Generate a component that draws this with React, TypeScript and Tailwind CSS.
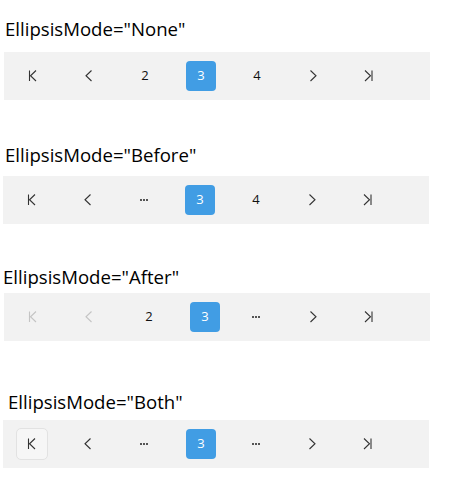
import React from 'react'

type Item = {
  kind: 'first' | 'prev' | 'next' | 'last' | 'page' | 'more'
  label?: string
  active?: boolean
  disabled?: boolean
  hovered?: boolean
  className?: string
}

function Icon({ kind, disabled }: { kind: Item['kind']; disabled?: boolean }) {
  const color = disabled ? '#c4c4c4' : '#333'
  return (
    <svg width="30" height="30" viewBox="0 0 30 30" fill="none" stroke={color} strokeWidth="1.1">
      {kind === 'first' && (
        <>
          <path d="M11.5 9.5v10.5" />
          <path d="M18 9.5l-5.5 5.25 5.5 5.25" />
        </>
      )}
      {kind === 'prev' && <path d="M17.5 9.5l-5.5 5.25 5.5 5.25" />}
      {kind === 'next' && <path d="M12.5 9.5l5.5 5.25-5.5 5.25" />}
      {kind === 'last' && (
        <>
          <path d="M11 9.5l5.5 5.25-5.5 5.25" />
          <path d="M18 9.5v10.5" />
        </>
      )}
    </svg>
  )
}

function PagerItem({ item }: { item: Item }) {
  const base = 'w-[30px] h-[30px] shrink-0 flex items-center justify-center'
  if (item.kind === 'page') {
    return (
      <div
        className={`${base} rounded-[4px] text-[13px] ${item.active ? 'bg-[#419de4] text-white' : 'text-[#111]'} ${item.className ?? ''}`}
      >
        {item.label}
      </div>
    )
  }
  if (item.kind === 'more') {
    return (
      <div className={`${base} gap-[1px] ${item.className ?? ''}`}>
        <span className="w-[2px] h-[2px] bg-[#555]" />
        <span className="w-[2px] h-[2px] bg-[#555]" />
        <span className="w-[2px] h-[2px] bg-[#555]" />
      </div>
    )
  }
  if (item.hovered) {
    return (
      <div className={`w-[32px] h-[32px] -ml-[1px] -mr-[1px] shrink-0 flex items-center justify-center rounded-[5px] border border-[#e2e2e2] bg-[#f6f6f6] ${item.className ?? ''}`}>
        <Icon kind={item.kind} disabled={item.disabled} />
      </div>
    )
  }
  return (
    <div className={`${base} ${item.className ?? ''}`}>
      <Icon kind={item.kind} disabled={item.disabled} />
    </div>
  )
}

function Section({
  title,
  items,
  labelClass,
  barClass,
}: {
  title: string
  items: Item[]
  labelClass: string
  barClass: string
}) {
  return (
    <div>
      <div className={`text-[18.6px] leading-[24px] text-black ${labelClass}`}>{title}</div>
      <div className={`h-[48px] w-[426px] bg-[#f2f2f2] flex items-center pl-[14px] gap-[26px] ${barClass}`}>
        {items.map((item, i) => (
          <PagerItem key={i} item={item} />
        ))}
      </div>
    </div>
  )
}

export default function App() {
  return (
    <div className="w-[451px] h-[484px] bg-white overflow-hidden" style={{ fontFamily: '"Open Sans", "Noto Sans", sans-serif' }}>
      <Section
        title={'EllipsisMode="None"'}
        labelClass="pt-[17px] pl-[5px]"
        barClass="mt-[11px] ml-[4px]"
        items={[
          { kind: 'first' },
          { kind: 'prev' },
          { kind: 'page', label: '2' },
          { kind: 'page', label: '3', active: true },
          { kind: 'page', label: '4' },
          { kind: 'next' },
          { kind: 'last' },
        ]}
      />
      <Section
        title={'EllipsisMode="Before"'}
        labelClass="pt-[43px] pl-[5px]"
        barClass="mt-[9px] ml-[3px]"
        items={[
          { kind: 'first' },
          { kind: 'prev' },
          { kind: 'more' },
          { kind: 'page', label: '3', active: true },
          { kind: 'page', label: '4' },
          { kind: 'next' },
          { kind: 'last' },
        ]}
      />
      <Section
        title={'EllipsisMode="After"'}
        labelClass="pt-[41px] pl-[3px]"
        barClass="mt-[4px] ml-[4px]"
        items={[
          { kind: 'first', disabled: true },
          { kind: 'prev', disabled: true },
          { kind: 'page', label: '2', className: 'ml-[4px]' },
          { kind: 'page', label: '3', active: true },
          { kind: 'more', className: '-ml-[5px]' },
          { kind: 'next', className: 'ml-[1px]' },
          { kind: 'last' },
        ]}
      />
      <Section
        title={'EllipsisMode="Both"'}
        labelClass="pt-[49px] pl-[8px]"
        barClass="mt-[6px] ml-[3px]"
        items={[
          { kind: 'first', hovered: true },
          { kind: 'prev' },
          { kind: 'more' },
          { kind: 'page', label: '3', active: true, className: 'ml-[1px]' },
          { kind: 'more', className: '-ml-[1px]' },
          { kind: 'next' },
          { kind: 'last' },
        ]}
      />
    </div>
  )
}
